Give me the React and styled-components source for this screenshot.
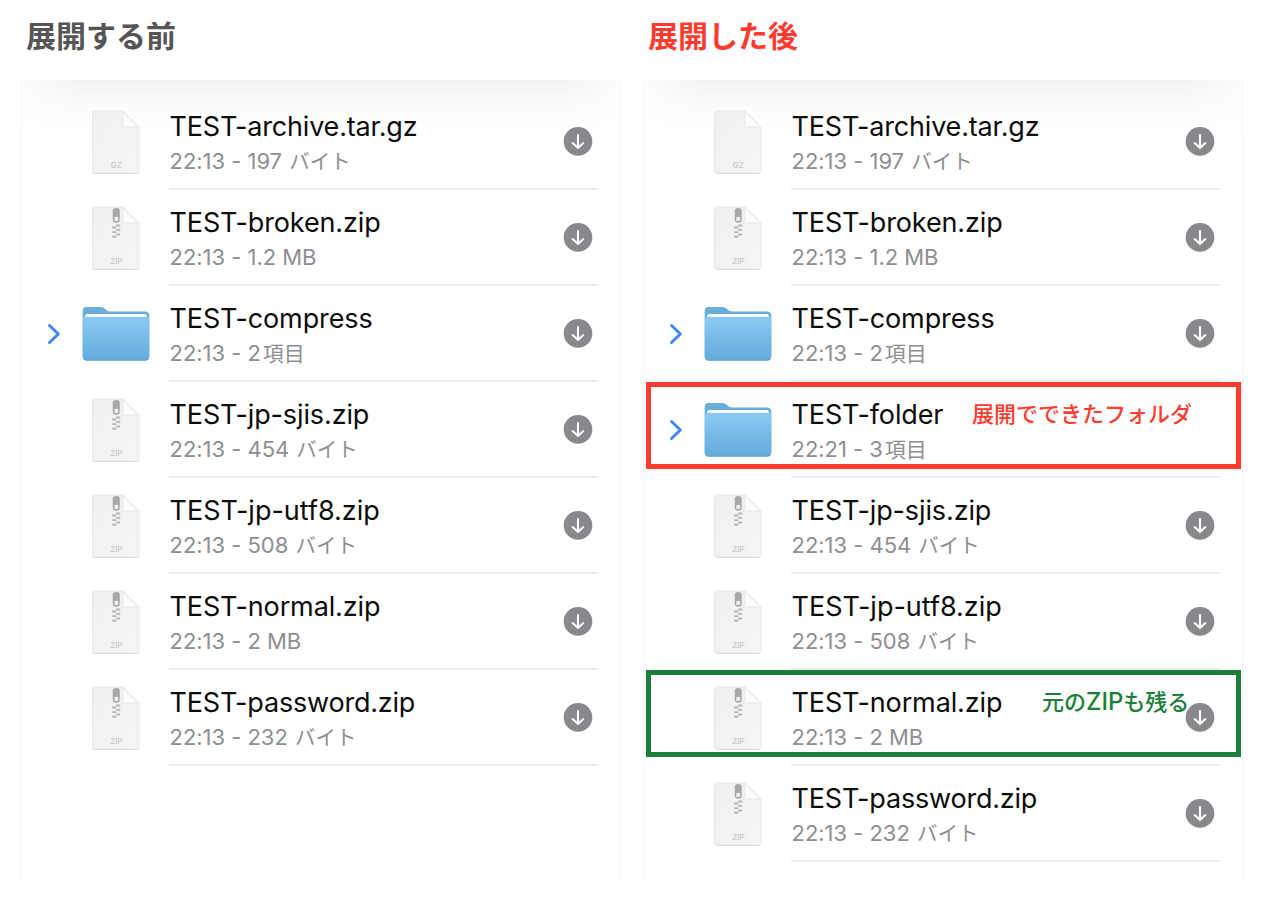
import styled, { createGlobalStyle } from 'styled-components';

const GlobalStyle = createGlobalStyle`
  body {
    margin: 0;
    background: #fff;
  }
`;

const Page = styled.main`
  display: flex;
  gap: 22px;
  box-sizing: border-box;
  width: 1264px;
  height: 900px;
  padding-left: 21px;
  overflow: hidden;
  font-family: Inter, 'Noto Sans CJK JP', sans-serif;
`;

const Column = styled.section`
  width: 600px;
`;

const Heading = styled.h2`
  display: flex;
  align-items: center;
  height: 80px;
  box-sizing: border-box;
  margin: 0;
  padding: 0 0 13px 5px;
  font: 700 30px 'Noto Sans CJK JP', sans-serif;
  line-height: 44px;
  color: ${({ $color }) => $color};
`;

const Panel = styled.div`
  box-sizing: border-box;
  height: 800px;
  padding-top: 14px;
  border: solid #f5f5f5;
  border-width: 0 1px;
  background:
    linear-gradient(90deg, #fffc, transparent 10%, transparent 90%, #fffc) 0 0 / 100% 50px no-repeat,
    linear-gradient(#f3f3f3, #f8f8f8 14px, #fcfcfc 28px, #fff 50px) 0 0 / 100% 50px no-repeat,
    #fff;
`;

const Row = styled.div`
  position: relative;
  display: flex;
  height: 96px;
`;

const Disclosure = styled.div`
  display: flex;
  align-items: center;
  justify-content: center;
  width: 64px;
`;

const Thumb = styled.div`
  display: flex;
  align-items: center;
  justify-content: center;
  width: 59px;
  margin-right: 24px;
`;

const Body = styled.div`
  display: flex;
  justify-content: space-between;
  box-sizing: border-box;
  width: 429px;
  border-bottom: 2px solid #ededee;
`;

const Name = styled.div`
  margin-top: 15px;
  padding-left: 0.5px;
  font-size: 27px;
  line-height: 36px;
  letter-spacing: ${({ $spacing }) => $spacing}px;
  color: #0c0c0c;
  white-space: nowrap;
`;

const Meta = styled.div`
  padding-left: 0.5px;
  font-size: 22px;
  line-height: 32px;
  letter-spacing: -0.03px;
  color: #8e8e92;
  white-space: nowrap;
`;

const Unit = styled.span`
  margin-left: ${({ $kana }) => ($kana ? 1 : 2)}px;
  font-size: ${({ $kana }) => ($kana ? 20.5 : 21)}px;
  letter-spacing: 0;
`;

const Status = styled.div`
  display: flex;
  align-items: center;
  margin-right: 5px;
`;

const Frame = styled.div`
  position: absolute;
  top: 0;
  left: 2px;
  box-sizing: border-box;
  width: 595px;
  height: 87px;
  border: 5px solid ${({ $color }) => $color};
`;

const Note = styled.span`
  position: absolute;
  top: 14px;
  left: ${({ $left }) => $left}px;
  font: 500 22px 'Noto Sans CJK JP', sans-serif;
  line-height: 32px;
  color: ${({ $color }) => $color};
  white-space: nowrap;
`;

const Latin = styled.span`
  font-family: Inter, sans-serif;
  font-size: 24px;
`;

const Svg = styled.svg`
  display: block;
  flex: none;
  overflow: visible;
`;

const FileIcon = ({ type }) => (
  <Svg width="50" height="66" viewBox="0 0 50 66">
    <defs>
      <linearGradient id="paper" x1="0" y1="0" x2="1" y2="1">
        <stop offset="0" stopColor="#f0f0f0" />
        <stop offset="1" stopColor="#f5f5f5" />
      </linearGradient>
      <linearGradient id="fold" x1="0" y1="1" x2="1" y2="0">
        <stop offset="0" stopColor="#fff" />
        <stop offset="0.4" stopColor="#fdfdfd" />
        <stop offset="0.55" stopColor="#e9e9e9" />
      </linearGradient>
    </defs>
    <path d="M4 2H32L48 18V62Q48 65 45.500 65H4Q1.500 65 1.500 62V4.500Q1.500 2 4 2Z" fill="#dedede" />
    <path d="M4 2H32L48 18V61Q48 64 45.500 64H4Q1.500 64 1.500 61V4.500Q1.500 2 4 2Z" fill="url(#paper)" stroke="#e4e4e4" strokeWidth="0.800" />
    <path d="M32 2L48 18H34Q32 18 32 16Z" fill="url(#fold)" stroke="#e4e4e4" strokeWidth="0.800" />
    {type === 'ZIP' && (
      <g fill="#a9a9a9">
        <path
          fillRule="evenodd"
          d="M21.700 6Q21.700 3 25.200 3Q28.800 3 28.800 6V14.200A3.550 3.550 0 0 1 21.700 14.200ZM25.250 11.700A2.200 2.200 0 1 0 25.250 16.100A2.200 2.200 0 1 0 25.250 11.700Z"
        />
        <path
          fill="#b5b5b5"
          d="M25.200 19.500h4v1.900h-4zM21.200 21.600h4v1.900h-4zM25.200 23.900h4v1.900h-4zM21.200 26.200h4v1.900h-4zM25.200 28.500h4v1.900h-4zM21.200 30.800h4v1.900h-4z"
        />
      </g>
    )}
    <text x="25.300" y="59" textAnchor="middle" fontSize="7.800" fontWeight="600" fill="#cacaca">
      {type}
    </text>
  </Svg>
);

const FolderIcon = () => (
  <Svg width="68" height="56" viewBox="0 0 68 56">
    <defs>
      <linearGradient id="folderFront" x1="0" y1="0" x2="0" y2="1">
        <stop offset="0" stopColor="#8bcbf2" />
        <stop offset="1" stopColor="#62abdd" />
      </linearGradient>
    </defs>
    <path d="M4.500 1H18.500Q21 1 22.500 2.500L25 4.700Q26 5.500 28 5.500H63Q67.300 5.500 67.300 10V50H0.700V5Q0.700 1 4.500 1Z" fill="#67afd9" />
    <path d="M3 14V10.500Q3 8 5.500 8H62.500Q65 8 65 10.500V14Z" fill="#fff" />
    <path d="M0.700 14Q0.700 10.800 4 10.800H64Q67.300 10.800 67.300 14V50.500Q67.300 54.500 63.500 54.500H4.500Q0.700 54.500 0.700 50.500Z" fill="url(#folderFront)" />
    <path d="M1.200 52Q2.200 54.200 4.500 54.200H63.500Q65.800 54.200 66.800 52" fill="none" stroke="#559acb" strokeWidth="0.800" />
  </Svg>
);

const Chevron = () => (
  <Svg width="12" height="20" viewBox="0 0 12 20">
    <path d="M1.500 1.500L10.300 10L1.500 18.500" fill="none" stroke="#3f87f6" strokeWidth="3" strokeLinecap="round" strokeLinejoin="round" />
  </Svg>
);

const DownloadIcon = () => (
  <Svg width="30" height="30" viewBox="0 0 30 30">
    <circle cx="15" cy="15.400" r="14.300" fill="#89898d" />
    <path d="M15 9V21.800M9.700 17.100L15 22L20.300 17.100" fill="none" stroke="#fff" strokeWidth="2.100" strokeLinecap="round" strokeLinejoin="round" />
  </Svg>
);

const archive = { name: 'TEST-archive.tar.gz', meta: '22:13 - 197 ', unit: 'バイト', type: 'GZ', spacing: -0.2 };
const broken = { name: 'TEST-broken.zip', meta: '22:13 - 1.2 MB', type: 'ZIP' };
const compress = { name: 'TEST-compress', meta: '22:13 - 2', unit: '項目', type: 'folder' };
const sjis = { name: 'TEST-jp-sjis.zip', meta: '22:13 - 454 ', unit: 'バイト', type: 'ZIP' };
const utf8 = { name: 'TEST-jp-utf8.zip', meta: '22:13 - 508 ', unit: 'バイト', type: 'ZIP', spacing: 0 };
const normal = { name: 'TEST-normal.zip', meta: '22:13 - 2 MB', type: 'ZIP' };
const password = { name: 'TEST-password.zip', meta: '22:13 - 232 ', unit: 'バイト', type: 'ZIP', spacing: -0.2 };

const RED = '#ff3b30';
const GREEN = '#1b7f3a';

const before = [archive, broken, compress, sjis, utf8, normal, password];
const after = [
  archive,
  broken,
  compress,
  {
    name: 'TEST-folder',
    meta: '22:21 - 3',
    unit: '項目',
    type: 'folder',
    local: true,
    note: { text: '展開でできたフォルダ', color: RED, left: 328 },
  },
  sjis,
  utf8,
  { ...normal, note: { text: <>元の<Latin>ZIP</Latin>も残る</>, color: GREEN, left: 398 } },
  password,
];

const FileRow = ({ name, meta, unit, type, local, note, spacing = -0.12 }) => (
  <Row>
    <Disclosure>{type === 'folder' && <Chevron />}</Disclosure>
    <Thumb>{type === 'folder' ? <FolderIcon /> : <FileIcon type={type} />}</Thumb>
    <Body>
      <div>
        <Name $spacing={spacing}>{name}</Name>
        <Meta>
          {meta}
          {unit && <Unit $kana={unit === 'バイト'}>{unit}</Unit>}
        </Meta>
      </div>
      {!local && (
        <Status>
          <DownloadIcon />
        </Status>
      )}
    </Body>
    {note && (
      <>
        <Frame $color={note.color} />
        <Note $color={note.color} $left={note.left}>{note.text}</Note>
      </>
    )}
  </Row>
);

const FileList = ({ title, color, files }) => (
  <Column>
    <Heading $color={color}>{title}</Heading>
    <Panel>
      {files.map((file) => (
        <FileRow key={file.name} {...file} />
      ))}
    </Panel>
  </Column>
);

export default function App() {
  return (
    <>
      <GlobalStyle />
      <Page>
        <FileList title="展開する前" color="#555" files={before} />
        <FileList title="展開した後" color={RED} files={after} />
      </Page>
    </>
  );
}
